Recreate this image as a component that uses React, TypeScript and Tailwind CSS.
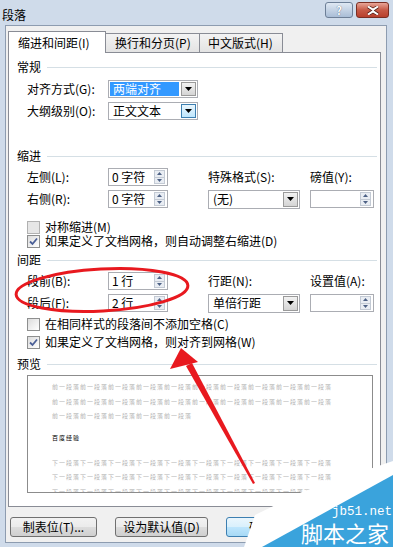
const Tri = ({ down = false }: { down?: boolean }) => (
  <svg width="5" height="3" viewBox="0 0 5 3">
    <path d={down ? "M0 0h5L2.5 3z" : "M0 3h5L2.5 0z"} fill="#4d6185" />
  </svg>
);

const DropArrow = () => (
  <svg width="7" height="4" viewBox="0 0 7 4">
    <path d="M0 0h7L3.5 4z" fill="#000" />
  </svg>
);

function Spin({ value = "", w }: { value?: string; w: string }) {
  return (
    <div className={`flex h-[18px] ${w} items-center border border-[#abadb3] bg-white pr-[2px]`}>
      <span className="flex-1 pl-[3px]">{value}</span>
      <div className="flex h-[14px] w-[11px] flex-col border border-[#c3cad4] bg-[#e9edf3]">
        <div className="flex flex-1 items-center justify-center border-b border-[#c3cad4]">
          <Tri />
        </div>
        <div className="flex flex-1 items-center justify-center">
          <Tri down />
        </div>
      </div>
    </div>
  );
}

function Select({
  value,
  w,
  h,
  selected = false,
  hot = false,
}: {
  value: string;
  w: string;
  h: string;
  selected?: boolean;
  hot?: boolean;
}) {
  return (
    <div className={`flex ${h} ${w} items-center border border-[#abadb3] bg-white p-px`}>
      <span
        className={`flex h-full flex-1 items-center pl-[3px] ${
          selected ? "mr-[2px] bg-[#3399ff] text-white" : ""
        }`}
      >
        {value}
      </span>
      <div
        className={`flex h-full w-[15px] items-center justify-center border ${
          hot
            ? "border-[#3c7fb1] bg-[linear-gradient(#eaf6fd,#bee6fd)]"
            : "border-[#9a9a9a] bg-[linear-gradient(#f2f2f2,#d4d4d4)]"
        }`}
      >
        <DropArrow />
      </div>
    </div>
  );
}

function Check({ checked = false, disabled = false }: { checked?: boolean; disabled?: boolean }) {
  return (
    <div
      className={`flex h-[13px] w-[13px] items-center justify-center border ${
        disabled
          ? "border-[#b1b1b1] bg-[#e6e6e6]"
          : "border-[#8e8f8f] bg-[linear-gradient(135deg,#dcdcdc,#ffffff)]"
      }`}
    >
      {checked && (
        <svg width="9" height="9" viewBox="0 0 9 9">
          <path d="M1 4.5l2.5 2.5L8 1.5" stroke="#4a5f97" strokeWidth="1.8" fill="none" />
        </svg>
      )}
    </div>
  );
}

function Section({ title, className }: { title: string; className: string }) {
  return (
    <div className={`flex h-4 items-center pl-2 pr-[3px] ${className}`}>
      <span>{title}</span>
      <div className="ml-[6px] h-px flex-1 bg-[#d5dfe5]" />
    </div>
  );
}

function CheckRow({ text, className, checked, disabled }: { text: string; className: string; checked?: boolean; disabled?: boolean }) {
  return (
    <div className={`flex h-[14px] items-center pl-[18px] ${className}`}>
      <Check checked={checked} disabled={disabled} />
      <span className="ml-[5px]">{text}</span>
    </div>
  );
}

const before = "前一段落前一段落前一段落前一段落前一段落前一段落前一段落前一段落前一段落前一段落";
const after = "下一段落下一段落下一段落下一段落下一段落下一段落下一段落下一段落下一段落下一段落";

function Button({ text, w, primary = false }: { text: string; w: string; primary?: boolean }) {
  return (
    <div
      className={`flex h-[20px] ${w} items-center justify-center rounded-[3px] border ${
        primary
          ? "border-[#3c7fb1] bg-[linear-gradient(#eaf6fd_0%,#d9f0fc_50%,#bee6fd_50%,#a7d9f5_100%)]"
          : "border-[#707070] bg-[linear-gradient(#f2f2f2_0%,#ebebeb_50%,#dddddd_50%,#cfcfcf_100%)]"
      }`}
    >
      {text}
    </div>
  );
}

export default function App() {
  return (
    <div className="relative h-[547px] w-[393px] overflow-hidden bg-[#cfdbea] font-['Noto_Sans_CJK_SC','Noto_Sans',sans-serif] text-[12px] leading-none text-black">
      {/* title bar */}
      <div className="flex h-[25px]">
        <span className="ml-[2px] mt-[9px]">段落</span>
        <div className="ml-auto mr-[4px] mt-[2px] flex gap-[3px]">
          <div className="flex h-[16px] w-[28px] items-center justify-center rounded-[3px] border border-[#6d7f97] bg-[linear-gradient(#dfe8f3,#a9bdd6)] text-[11px] font-bold text-white [text-shadow:0_0_1px_#33445c]">
            ?
          </div>
          <div className="flex h-[16px] w-[33px] items-center justify-center rounded-[3px] border border-[#7a2e23] bg-[linear-gradient(#e8a597,#c75a46_50%,#b8402d)]">
            <svg width="12" height="9" viewBox="0 0 12 9">
              <path d="M1 0.5l5 3.2 5-3.2M1 8.5l5-3.2 5 3.2" stroke="#4a1a12" strokeWidth="3.4" fill="none" />
              <path d="M1 0.5l5 3.2 5-3.2M1 8.5l5-3.2 5 3.2" stroke="#fff" strokeWidth="2" fill="none" />
            </svg>
          </div>
        </div>
      </div>

      {/* dialog body */}
      <div className="ml-[5px] mr-[6px] h-[518px] border border-[#8d9cb0] bg-[#f0f0f0]">
        <div className="relative z-10 -mb-px ml-[2px] mt-[5px] flex h-[22px] items-end">
          <div className="flex h-[22px] w-[98px] items-center border border-b-0 border-[#898c95] bg-white pl-[9px]">
            缩进和间距(I)
          </div>
          <div className="mb-px flex h-[19px] w-[94px] items-center border border-b-0 border-l-0 border-[#898c95] bg-[linear-gradient(#f3f3f3,#e3e3e3)] pl-[9px]">
            换行和分页(P)
          </div>
          <div className="mb-px flex h-[19px] w-[83px] items-center border border-b-0 border-l-0 border-[#898c95] bg-[linear-gradient(#f3f3f3,#e3e3e3)] pl-[8px]">
            中文版式(H)
          </div>
        </div>

        <div className="ml-[2px] flex h-[455px] w-[373px] flex-col border border-[#898c95] bg-white">
          <Section title="常规" className="mt-[6px]" />
          <div className="mt-[5px] flex h-[18px] items-center pl-[18px]">
            <span className="w-[81px]">对齐方式(G):</span>
            <Select value="两端对齐" w="w-[90px]" h="h-[18px]" selected />
          </div>
          <div className="mt-[4px] flex h-[18px] items-center pl-[18px]">
            <span className="w-[81px]">大纲级别(O):</span>
            <Select value="正文文本" w="w-[90px]" h="h-[18px]" hot />
          </div>

          <Section title="缩进" className="mt-[28px]" />
          <div className="mt-[4px] flex h-[18px] items-center pl-[18px]">
            <span className="w-[81px]">左侧(L):</span>
            <Spin value="0 字符" w="w-[60px]" />
            <span className="ml-[40px] w-[102px]">特殊格式(S):</span>
            <span>磅值(Y):</span>
          </div>
          <div className="mt-[4px] flex h-[18px] items-center pl-[18px]">
            <span className="w-[81px]">右侧(R):</span>
            <Spin value="0 字符" w="w-[60px]" />
            <div className="ml-[40px]">
              <Select value="(无)" w="w-[92px]" h="h-[19px]" />
            </div>
            <div className="ml-[10px]">
              <Spin w="w-[64px]" />
            </div>
          </div>
          <CheckRow text="对称缩进(M)" className="mt-[12px]" disabled />
          <CheckRow text="如果定义了文档网格，则自动调整右缩进(D)" className="" checked />

          <Section title="间距" className="mt-[4px]" />
          <div className="mt-[4px] flex h-[18px] items-center pl-[18px]">
            <span className="w-[81px]">段前(B):</span>
            <Spin value="1 行" w="w-[60px]" />
            <span className="ml-[40px] w-[102px]">行距(N):</span>
            <span>设置值(A):</span>
          </div>
          <div className="mt-[4px] flex h-[18px] items-center pl-[18px]">
            <span className="w-[81px]">段后(F):</span>
            <Spin value="2 行" w="w-[60px]" />
            <div className="ml-[40px]">
              <Select value="单倍行距" w="w-[92px]" h="h-[19px]" />
            </div>
            <div className="ml-[10px]">
              <Spin w="w-[64px]" />
            </div>
          </div>
          <CheckRow text="在相同样式的段落间不添加空格(C)" className="mt-[5px]" />
          <CheckRow text="如果定义了文档网格，则对齐到网格(W)" className="mt-[4px]" checked />

          <Section title="预览" className="mt-[7px]" />
          <div className="ml-[18px] mt-[3px] h-[118px] w-[346px] overflow-hidden border border-[#8c8c8c] bg-white pl-[24px] pt-[4px] text-[6px] leading-[14.5px] tracking-[1px] whitespace-nowrap">
            <div className="text-[#b4b4b4]">{before}</div>
            <div className="text-[#b4b4b4]">{before}</div>
            <div className="text-[#b4b4b4]">前一段落前一段落前一段落前一段落前一段落</div>
            <div className="mt-[7.5px]">百度经验</div>
            <div className="mt-[10px] text-[#b4b4b4]">{after}</div>
            <div className="text-[#b4b4b4]">{after}</div>
            <div className="text-[#b4b4b4]">{after}</div>
          </div>
        </div>

        <div className="ml-[4px] mt-[10px] flex gap-[18px]">
          <Button text="制表位(T)..." w="w-[87px]" />
          <Button text="设为默认值(D)" w="w-[93px]" />
          <Button text="确定" w="w-[70px]" primary />
        </div>
      </div>

      {/* annotations and watermark */}
      <svg className="pointer-events-none absolute left-0 top-0" width="393" height="547" viewBox="0 0 393 547">
        <ellipse cx="102" cy="290" rx="86" ry="21" transform="rotate(-3 102 290)" stroke="#e8191f" strokeWidth="3" fill="none" />
        <path d="M181 348L170 369L198 362Z" fill="#e8191f" />
        <path d="M186 366L192 363L255 483L253 484Z" fill="#e8191f" />
        <path d="M244 547L255 515L302 492L393 461L393 547Z" fill="#ffffff" />
        <path d="M262 547L393 475L393 547Z" fill="#3aa3dc" />
      </svg>
      <span className="absolute left-[332px] top-[506px] font-['Liberation_Mono',monospace] text-[12.5px] leading-none text-white">
        jb51.net
      </span>
      <span className="absolute left-[301px] top-[521px] text-[22px] leading-none text-white">脚本之家</span>
    </div>
  );
}
